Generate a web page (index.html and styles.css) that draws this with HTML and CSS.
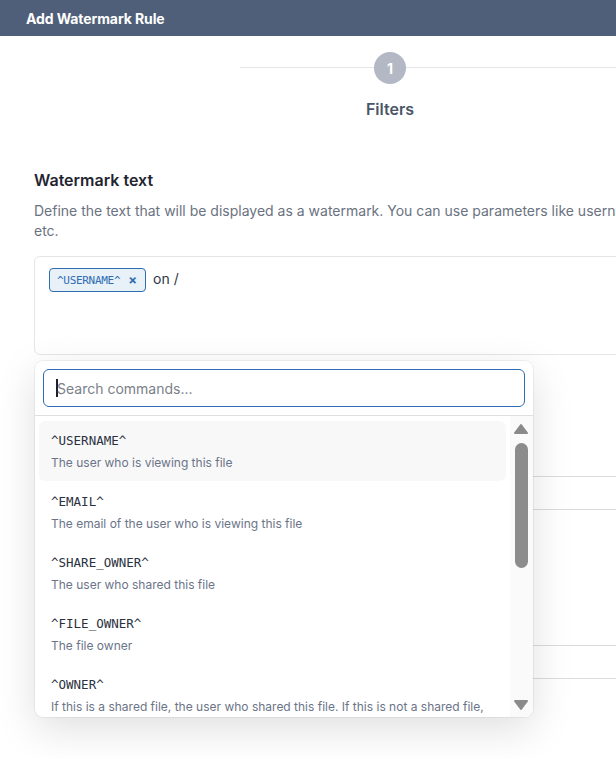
FILE: index.html
```html
<!DOCTYPE html>
<html lang="en">
<head>
<meta charset="utf-8">
<title>Add Watermark Rule</title>
<link rel="stylesheet" href="styles.css">
</head>
<body>
<header class="topbar">Add Watermark Rule</header>
<main class="page">
  <div class="stepper">
    <div class="step">
      <div class="step-circle">1</div>
      <div class="step-label">Filters</div>
    </div>
  </div>

  <section class="section">
    <h2 class="section-title">Watermark text</h2>
    <p class="section-desc">Define the text that will be displayed as a watermark. You can use parameters like username, email, etc.</p>

    <div class="editor-wrap">
      <div class="editor">
        <span class="chip"><span class="chip-text">^USERNAME^</span><span class="chip-x">×</span></span><span class="editor-text">on /</span>
      </div>

      <div class="dropdown">
        <div class="search-row">
          <div class="search"><span class="caret"></span><span class="placeholder">Search commands...</span></div>
        </div>
        <div class="list-area">
          <ul class="list">
            <li class="item active"><div class="item-code">^USERNAME^</div><div class="item-desc">The user who is viewing this file</div></li>
            <li class="item"><div class="item-code">^EMAIL^</div><div class="item-desc">The email of the user who is viewing this file</div></li>
            <li class="item"><div class="item-code">^SHARE_OWNER^</div><div class="item-desc">The user who shared this file</div></li>
            <li class="item"><div class="item-code">^FILE_OWNER^</div><div class="item-desc">The file owner</div></li>
            <li class="item"><div class="item-code">^OWNER^</div><div class="item-desc">If this is a shared file, the user who shared this file. If this is not a shared file, the file owner</div></li>
          </ul>
          <div class="scrollbar">
            <svg class="sb-arrow" width="16" height="12" viewBox="0 0 16 12"><path d="M8 2 L14 10 L2 10 Z" fill="#8a8a8a" stroke="#8a8a8a" stroke-width="2" stroke-linejoin="round"/></svg>
            <div class="sb-thumb"></div>
            <div class="sb-space"></div>
            <svg class="sb-arrow" width="16" height="12" viewBox="0 0 16 12"><path d="M2 2 L14 2 L8 10 Z" fill="#8a8a8a" stroke="#8a8a8a" stroke-width="2" stroke-linejoin="round"/></svg>
          </div>
        </div>
      </div>
    </div>
  </section>

  <div class="field field-one"><div class="field-input"></div></div>
  <div class="field field-two"><div class="field-input"></div></div>
</main>
</body>
</html>
```
FILE: styles.css
```css
html, body {
  margin: 0;
  padding: 0;
  overflow: hidden;
  background: #ffffff;
}
body {
  font-family: Inter, "Noto Sans", sans-serif;
  color: #1f2937;
  width: 616px;
  height: 758px;
}
.topbar {
  height: 36px;
  background: #4f5e79;
  color: #ffffff;
  font-size: 14px;
  font-weight: 700;
  display: flex;
  align-items: center;
  padding-left: 26px;
  letter-spacing: -0.1px;
}
.page {
  width: 720px;
  padding: 0 34px;
}
.stepper {
  margin-top: 16px;
  margin-left: 206px;
  padding-left: 134px;
  background: linear-gradient(#e3e5e9, #e3e5e9) 0 15px / 100% 1px no-repeat;
  width: 400px;
}
.step {
  width: 32px;
  display: flex;
  flex-direction: column;
  align-items: center;
}
.step-circle {
  width: 32px;
  height: 32px;
  border-radius: 50%;
  background: #b3b8c4;
  color: #ffffff;
  font-size: 14px;
  font-weight: 700;
  display: flex;
  align-items: center;
  justify-content: center;
}
.step-label {
  margin-top: 15px;
  font-size: 16px;
  line-height: 20px;
  font-weight: 600;
  color: #4a5568;
  white-space: nowrap;
}
.section {
  margin-top: 49px;
}
.section-title {
  margin: 0;
  font-size: 16px;
  line-height: 24px;
  font-weight: 600;
  color: #1f2530;
}
.section-desc {
  margin: 9px 0 0;
  width: 670px;
  font-size: 14px;
  line-height: 20px;
  color: #6b7280;
}
.editor-wrap {
  position: relative;
  margin-top: 15px;
}
.editor {
  border: 1px solid #e4e6ea;
  border-radius: 6px;
  padding: 11px 14px 0;
  box-sizing: border-box;
  height: 99px;
  display: flex;
  align-items: flex-start;
}
.chip {
  display: inline-flex;
  align-items: center;
  height: 24px;
  box-sizing: border-box;
  border: 1px solid #2f6db3;
  background: #e8f0f8;
  border-radius: 4px;
  padding: 0 8px 0 7px;
  color: #2f6db3;
}
.chip-text {
  font-family: "DejaVu Sans Mono", monospace;
  font-size: 11px;
  letter-spacing: -0.3px;
}
.chip-x {
  margin-left: 8px;
  font-size: 13px;
  font-weight: 700;
  line-height: 1;
}
.editor-text {
  margin-left: 7px;
  font-size: 14px;
  line-height: 22px;
  color: #2d3748;
}
.dropdown {
  position: absolute;
  left: 1px;
  top: 105px;
  width: 498px;
  height: 356px;
  background: #ffffff;
  border-radius: 8px;
  box-shadow: 0 0 0 1px rgba(0, 0, 0, 0.05), 0 12px 40px rgba(0, 0, 0, 0.13);
  display: flex;
  flex-direction: column;
  overflow: hidden;
  z-index: 2;
}
.search-row {
  padding: 8px 8px 8px;
  border-bottom: 1px solid #dedfe2;
}
.search {
  height: 38px;
  box-sizing: border-box;
  border: 1px solid #2f6db3;
  border-radius: 6px;
  display: flex;
  align-items: center;
  padding-left: 12px;
}
.caret {
  width: 2px;
  height: 18px;
  background: #1a202c;
  margin-right: -1px;
}
.placeholder {
  font-size: 14px;
  color: #7a7f88;
}
.list-area {
  flex: 1;
  display: flex;
  min-height: 0;
}
.list {
  list-style: none;
  margin: 0;
  padding: 5px 4px 0 4px;
  width: 475px;
  box-sizing: border-box;
  overflow: hidden;
  display: flex;
  flex-direction: column;
  gap: 1px;
}
.item {
  flex: none;
  height: 60px;
  box-sizing: border-box;
  padding: 12px 12px 0;
  border-radius: 6px;
}
.item.active {
  background: #f8f8f9;
}
.item-code {
  font-family: "DejaVu Sans Mono", monospace;
  font-size: 12.5px;
  line-height: 16px;
  color: #2a3140;
}
.item-desc {
  margin-top: 5px;
  font-size: 12px;
  line-height: 18px;
  color: #6b7488;
}
.scrollbar {
  flex: 1;
  background: #fafafa;
  display: flex;
  flex-direction: column;
  align-items: center;
  padding: 7px 1px 6px 0;
  box-sizing: border-box;
}
.sb-arrow {
  display: block;
  flex: none;
}
.sb-thumb {
  margin-top: 8px;
  width: 13px;
  height: 125px;
  border-radius: 7px;
  background: #8c8c8c;
}
.sb-space {
  flex: 1;
}
.field {
  padding-left: 60px;
}
.field-one {
  margin-top: 121px;
}
.field-two {
  margin-top: 135px;
}
.field-input {
  height: 32px;
  border-top: 1px solid #dadce0;
  border-bottom: 1px solid #dadce0;
}
```
